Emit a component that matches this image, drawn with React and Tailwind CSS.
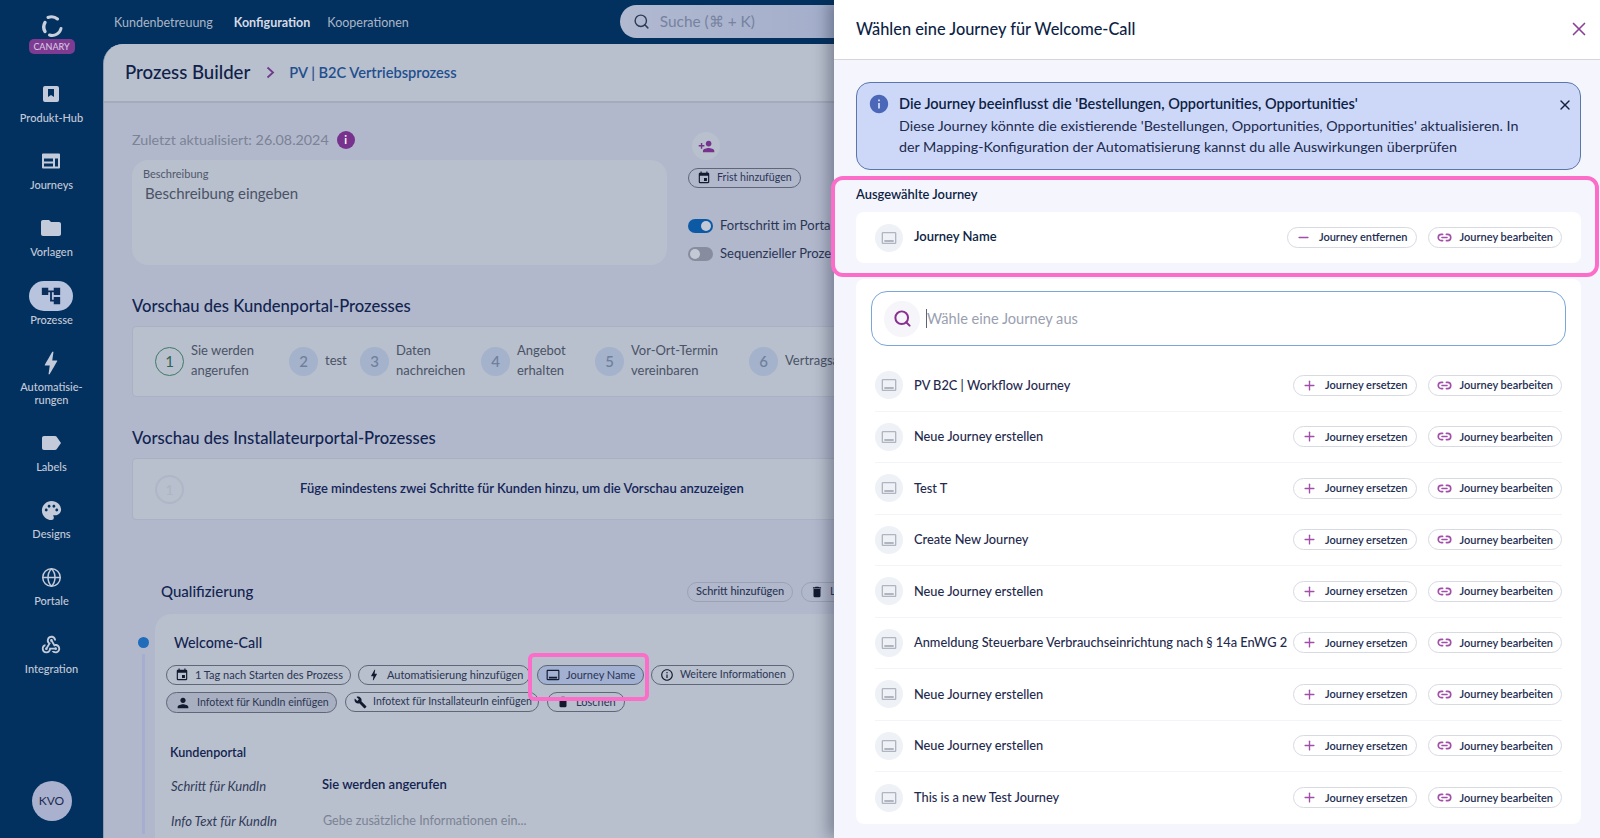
import { Globe, Link2, Minus, Plus, Search, X } from 'lucide-react';
import {
  MdAccountTree,
  MdBolt,
  MdBuild,
  MdDelete,
  MdEvent,
  MdFolder,
  MdInfo,
  MdInfoOutline,
  MdLabel,
  MdOutlineCallToAction,
  MdPalette,
  MdPerson,
  MdPersonAdd,
  MdWebhook,
} from 'react-icons/md';

function HubIcon() {
  return (
    <svg width="20" height="20" viewBox="0 0 20 20">
      <path fillRule="evenodd" fill="#c3cad9" d="M4 2h12a2 2 0 0 1 2 2v12a2 2 0 0 1-2 2H4a2 2 0 0 1-2-2V4a2 2 0 0 1 2-2zm3 3v8l3-2 3 2V5z" />
    </svg>
  );
}

function JourneysIcon() {
  return (
    <svg width="20" height="20" viewBox="0 0 20 20">
      <path fillRule="evenodd" fill="#c3cad9" d="M2 2.500h16a1 1 0 0 1 1 1v13a1 1 0 0 1-1 1H2a1 1 0 0 1-1-1v-13a1 1 0 0 1 1-1zm1 5v3h9v-3zm0 5v3h9v-3zm11-5v8h3v-8z" />
    </svg>
  );
}

function Logo() {
  return (
    <svg width="24" height="24" viewBox="0 0 24 24" fill="none" stroke="#c9d0dc" strokeLinecap="round">
      <path d="M8 3.500A9 9 0 0 1 17.500 5" strokeWidth="3" />
      <path d="M5 8.500A9 9 0 0 0 5 17.500" strokeWidth="3.400" />
      <path d="M9.500 21A9 9 0 0 0 21 14.500" strokeWidth="3" />
    </svg>
  );
}

const navItems = [
  { label: 'Produkt-Hub', icon: <HubIcon /> },
  { label: 'Journeys', icon: <JourneysIcon /> },
  { label: 'Vorlagen', icon: <MdFolder size={24} color="#c3cad9" /> },
  { label: 'Prozesse', icon: <MdAccountTree size={22} color="#0b2e5c" />, active: true },
  { label: 'Automatisie-\nrungen', icon: <MdBolt size={30} color="#c3cad9" /> },
  { label: 'Labels', icon: <MdLabel size={24} color="#c3cad9" /> },
  { label: 'Designs', icon: <MdPalette size={23} color="#c3cad9" /> },
  { label: 'Portale', icon: <Globe size={21} color="#c3cad9" strokeWidth={1.7} /> },
  { label: 'Integration', icon: <MdWebhook size={22} color="#c3cad9" /> },
];

const steps = [
  { n: 1, lines: ['Sie werden', 'angerufen'], width: 'w-[134px]', first: true },
  { n: 2, lines: ['test'], width: 'w-[71px]' },
  { n: 3, lines: ['Daten', 'nachreichen'], width: 'w-[121px]' },
  { n: 4, lines: ['Angebot', 'erhalten'], width: 'w-[114px]' },
  { n: 5, lines: ['Vor-Ort-Termin', 'vereinbaren'], width: 'w-[154px]' },
  { n: 6, lines: ['Vertragsabschluss'], width: 'w-[150px]' },
];

const journeys = [
  'PV B2C | Workflow Journey',
  'Neue Journey erstellen',
  'Test T',
  'Create New Journey',
  'Neue Journey erstellen',
  'Anmeldung Steuerbare Verbrauchseinrichtung nach § 14a EnWG 2',
  'Neue Journey erstellen',
  'Neue Journey erstellen',
  'This is a new Test Journey',
];

function Sidebar() {
  return (
    <aside className="w-[103px] shrink-0 bg-[#03315f] flex flex-col items-center">
      <div className="h-[79px] flex flex-col items-center pt-[14px]">
        <Logo />
        <span className="mt-[1px] h-[15px] w-[46px] rounded-[5px] bg-[#7d3c92] text-[9px] leading-[15px] font-medium text-center text-[#d9c6e2]">CANARY</span>
      </div>
      <nav className="flex flex-col items-center gap-[21.200px]">
        {navItems.map((item) => (
          <div key={item.label} className="flex flex-col items-center">
            <div className={item.active ? 'h-[30px] w-[44px] rounded-full bg-[#b8c4de] flex items-center justify-center' : 'h-[30px] flex items-center justify-center'}>
              {item.icon}
            </div>
            <span className="text-[11px] leading-[13.500px] min-h-[16px] pt-[2px] font-medium text-[#c3cad9] text-center whitespace-pre-line">{item.label}</span>
          </div>
        ))}
      </nav>
      <div className="mt-auto mb-[17px] w-[40px] h-[40px] rounded-full bg-[#a9b1cf] flex items-center justify-center text-[12px] text-[#1d2b4f]">KVO</div>
    </aside>
  );
}

function TopBar() {
  return (
    <header className="h-[44px] shrink-0 flex items-center relative">
      <nav className="flex items-center pl-[11px] pt-[2px] text-[12.500px] text-[#a9b5c6]">
        <span>Kundenbetreuung</span>
        <span className="ml-[21px] font-bold text-[#d5dae4]">Konfiguration</span>
        <span className="ml-[17px]">Kooperationen</span>
      </nav>
      <div className="ml-[211px] mb-[1px] w-[400px] h-[33px] rounded-full bg-gradient-to-r from-[#b0b9d0] to-[#99a5c6] flex items-center pl-[13px]">
        <Search size={17} color="#2e3a55" strokeWidth={2} />
        <span className="ml-[10px] text-[15.400px] text-[#76829f]">Suche (⌘ + K)</span>
      </div>
    </header>
  );
}

function Pill({ icon, children, className = '' }) {
  return (
    <span className={`inline-flex items-center shrink-0 h-[20px] pl-[8px] gap-[6px] rounded-full border border-[#5e6678] text-[11px] text-[#2a3554] whitespace-nowrap ${className}`}>
      {icon}
      {children}
    </span>
  );
}

function Toggle({ on }) {
  return (
    <span className={on ? 'w-[25px] h-[14px] rounded-full bg-[#0c5aa5] flex items-center justify-end pr-[2px]' : 'w-[25px] h-[14px] rounded-full bg-[#878d9f] flex items-center pl-[2px]'}>
      <span className="w-[10px] h-[10px] rounded-full bg-[#c3c9d5]" />
    </span>
  );
}

function StepCircle({ n, first }) {
  return (
    <span className={first
      ? 'w-[29px] h-[29px] shrink-0 rounded-full border border-[#3f7a64] text-[#2c6450] flex items-center justify-center text-[15px]'
      : 'w-[29px] h-[29px] shrink-0 rounded-full bg-[#a4b2cb] text-[#6f7f9c] flex items-center justify-center text-[15px] font-medium'}>
      {n}
    </span>
  );
}

function MainPanel() {
  return (
    <main className="flex-1 min-h-0 rounded-tl-[20px] bg-[#b1b8cc] overflow-hidden border-l border-[#8e9ab0]">
      <div className="h-[59px] bg-[#b8bfcd] border-b-2 border-[#a4abba] flex items-center pl-[21px]">
        <span className="text-[18.600px] font-medium text-[#0f2148]">Prozess Builder</span>
        <svg className="ml-[16px]" width="9" height="13" viewBox="0 0 9 13" fill="none" stroke="#6f3a8c" strokeWidth="1.800"><path d="M1.500 1.500l5.500 5-5.500 5" /></svg>
        <span className="ml-[14px] text-[14.600px] font-semibold text-[#1f4f8f]">PV | B2C Vertriebsprozess</span>
      </div>

      <div className="pl-[28px] w-[1200px]">
        <div className="flex mt-[27px]">
          <div className="w-[535px]">
            <div className="h-[20px] flex items-center gap-[8px] text-[14.300px] text-[#7b8394]">
              Zuletzt aktualisiert: 26.08.2024
              <span className="w-[18px] h-[18px] rounded-full bg-[#77328e] text-white text-[11px] font-bold flex items-center justify-center">i</span>
            </div>
            <div className="mt-[10px] h-[105px] rounded-[16px] bg-[#b8bfcd] pl-[11px] pt-[7px]">
              <div className="text-[11px] leading-[14px] text-[#4f586b]">Beschreibung</div>
              <div className="mt-[2px] pl-[2px] text-[15px] leading-[20px] text-[#4a5366]">Beschreibung eingeben</div>
            </div>
          </div>
          <div className="ml-[21px] mt-[2px] flex flex-col items-start">
            <span className="ml-[4px] w-[28px] h-[28px] rounded-full bg-[#b8bfcd] flex items-center justify-center">
              <MdPersonAdd size={17} color="#77328e" />
            </span>
            <Pill className="mt-[8px] w-[113px] !text-[10.600px]" icon={<MdEvent size={14} color="#111a2e" />}>Frist hinzufügen</Pill>
            <div className="mt-[31px] h-[14px] flex items-center gap-[7px] text-[13px] text-[#2a3554]"><Toggle on />Fortschritt im Portal anzeigen</div>
            <div className="mt-[14px] h-[14px] flex items-center gap-[7px] text-[13px] text-[#2a3554]"><Toggle />Sequenzieller Prozess</div>
          </div>
        </div>

        <h2 className="mt-[29px] h-[24px] leading-[24px] text-[16.600px] font-medium text-[#122450]">Vorschau des Kundenportal-Prozesses</h2>
        <div className="mt-[8px] h-[71px] rounded-[4px] bg-[#b8bfcd] border border-[#a9b1c2] flex items-center pl-[22px]">
          {steps.map((s) => (
            <div key={s.n} className={`flex items-center gap-[7px] shrink-0 ${s.width}`}>
              <StepCircle n={s.n} first={s.first} />
              <div className="-mt-[2px] text-[13px] leading-[19.500px] text-[#4a5366]">
                {s.lines.map((l) => <div key={l}>{l}</div>)}
              </div>
            </div>
          ))}
        </div>

        <h2 className="mt-[29px] h-[24px] leading-[24px] text-[16.600px] font-medium text-[#122450]">Vorschau des Installateurportal-Prozesses</h2>
        <div className="mt-[8px] h-[62px] rounded-[4px] bg-[#b8bfcd] border border-[#a9b1c2] flex items-center pl-[22px]">
          <span className="w-[29px] h-[29px] rounded-full border-2 border-[#afb6c6] text-[#adb4c4] flex items-center justify-center text-[14px]">1</span>
          <span className="ml-[116px] text-[13px] font-semibold text-[#14265a]">Füge mindestens zwei Schritte für Kunden hinzu, um die Vorschau anzuzeigen</span>
        </div>

        <div className="mt-[61px] h-[21px] flex items-center pl-[29px]">
          <span className="w-[526px] text-[15px] font-medium text-[#122450]">Qualifizierung</span>
          <Pill className="w-[106px] !border-[#9aa2b6] font-medium">Schritt hinzufügen</Pill>
          <Pill className="ml-[8px] w-[90px] !border-[#9aa2b6]" icon={<MdDelete size={14} color="#111a2e" />}>Löschen</Pill>
        </div>

        <div className="mt-[12px] flex">
          <div className="w-[23px] shrink-0 flex flex-col items-center">
            <span className="mt-[23px] w-[11px] h-[11px] rounded-full bg-[#1f6cbb]" />
            <span className="mt-[6px] w-[3px] h-[180px] bg-[#a5aed0]" />
          </div>
          <div className="flex-1 rounded-tl-[16px] bg-[#b8bfcd] pl-[11px] h-[240px]">
            <div className="mt-[19px] pl-[8px] h-[20px] leading-[20px] text-[14.300px] font-medium text-[#122450]">Welcome-Call</div>
            <div className="mt-[12px] flex gap-[7px]">
              <Pill className="w-[185px]" icon={<MdEvent size={14} color="#111a2e" />}>1 Tag nach Starten des Prozess</Pill>
              <Pill className="w-[172px]" icon={<MdBolt size={14} color="#111a2e" />}>Automatisierung hinzufügen</Pill>
              <Pill className="w-[107px] bg-[#a2b0d2]" icon={<MdOutlineCallToAction size={14} color="#111a2e" />}>Journey Name</Pill>
              <Pill className="w-[143px] !text-[10.600px]" icon={<MdInfoOutline size={14} color="#111a2e" />}>Weitere Informationen</Pill>
            </div>
            <div className="mt-[7px] flex gap-[8px]">
              <Pill className="w-[171px] !h-[21px] bg-[#a8afc0] !text-[10.600px]" icon={<MdPerson size={16} color="#111a2e" />}>Infotext für KundIn einfügen</Pill>
              <Pill className="w-[194px] !text-[10.600px]" icon={<MdBuild size={13} color="#111a2e" />}>Infotext für InstallateurIn einfügen</Pill>
              <Pill className="w-[78px]" icon={<MdDelete size={14} color="#111a2e" />}>Löschen</Pill>
            </div>
            <div className="mt-[31px] pl-[4px] text-[12.600px] leading-[18px] font-semibold text-[#122450]">Kundenportal</div>
            <div className="mt-[14px] pl-[5px] flex items-center text-[13px] leading-[18px]">
              <span className="w-[151px] italic text-[#2f3a58] translate-y-[1px]">Schritt für KundIn</span>
              <span className="font-semibold text-[#122450] -translate-y-[1px]">Sie werden angerufen</span>
            </div>
            <div className="mt-[18px] pl-[5px] flex items-center text-[13px] leading-[18px]">
              <span className="w-[152px] italic text-[#2f3a58]">Info Text für KundIn</span>
              <span className="text-[12.600px] text-[#7b8394]">Gebe zusätzliche Informationen ein...</span>
            </div>
          </div>
        </div>
      </div>
    </main>
  );
}

function ActionPill({ icon, children }) {
  return (
    <span className="inline-flex items-center h-[21px] pl-[8px] pr-[8px] gap-[8px] rounded-full border border-[#d8dae2] bg-white text-[11px] font-semibold text-[#232d52] whitespace-nowrap">
      {icon}
      {children}
    </span>
  );
}

function JourneyAvatar() {
  return (
    <span className="w-[28px] h-[28px] shrink-0 rounded-full bg-[#eef1f6] flex items-center justify-center">
      <MdOutlineCallToAction size={16} color="#b0b5c0" />
    </span>
  );
}

function EditPill() {
  return <ActionPill icon={<Link2 size={15} color="#a14fa8" strokeWidth={2.600} />}>Journey bearbeiten</ActionPill>;
}

function Drawer() {
  return (
    <aside className="absolute top-0 right-0 bottom-0 w-[766px] bg-[#f5f6fd] shadow-[-6px_0_14px_rgba(20,25,45,0.35)] flex flex-col">
      <div className="h-[60px] shrink-0 bg-white border-b border-[#d5d6da] flex items-center justify-between pl-[22px] pr-[10px] pb-[1px]">
        <h1 className="text-[16.350px] font-medium text-[#0e1f45]">Wählen eine Journey für Welcome-Call</h1>
        <X size={22} color="#8b3f96" strokeWidth={1.8} />
      </div>

      <div className="mt-[22px] mx-[22px] mr-[19px] h-[88px] rounded-[14px] bg-[#cdd8f8] border border-[#5a76ab] flex pl-[13px] pr-[7px] pt-[10px] text-[14.300px] leading-[21.500px] text-[#1c2a4e]">
        <MdInfo size={22} color="#4a67b8" className="shrink-0 -ml-[2px]" />
        <div className="ml-[9px] mr-[24px] flex-1">
          <div className="text-[14.500px] font-semibold text-[#0e1f45]">Die Journey beeinflusst die 'Bestellungen, Opportunities, Opportunities'</div>
          <div>Diese Journey könnte die existierende 'Bestellungen, Opportunities, Opportunities' aktualisieren. In der Mapping-Konfiguration der Automatisierung kannst du alle Auswirkungen überprüfen</div>
        </div>
        <X size={16} color="#15203d" strokeWidth={2} className="shrink-0 mt-[4px]" />
      </div>

      <div className="mt-[16px] pl-[22px] h-[16px] leading-[16px] text-[12.900px] font-semibold text-[#0e1f45]">Ausgewählte Journey</div>
      <div className="mt-[10px] ml-[22px] mr-[19px] h-[51px] rounded-[8px] bg-white flex items-center px-[19px]">
        <JourneyAvatar />
        <span className="ml-[11px] -mt-[2px] text-[13px] font-semibold text-[#0e1f45]">Journey Name</span>
        <span className="ml-auto flex gap-[11px]">
          <ActionPill icon={<Minus size={15} color="#a14fa8" strokeWidth={2.400} />}>Journey entfernen</ActionPill>
          <EditPill />
        </span>
      </div>

      <div className="mt-[16px] ml-[22px] mr-[19px] rounded-[8px] bg-white pt-[12px]">
        <div className="mx-[15px] h-[55px] rounded-[16px] border border-[#7ba6db] flex items-center pl-[12px]">
          <span className="w-[36px] h-[36px] rounded-full bg-[#f5f5fa] flex items-center justify-center">
            <Search size={19} color="#8a2f90" strokeWidth={2.500} />
          </span>
          <span className="ml-[6px] border-l border-[#5c6478] text-[14.600px] leading-[19px] text-[#9a9fb0]">Wähle eine Journey aus</span>
        </div>
        <div className="mt-[14px]">
          {journeys.map((name, i) => (
            <div key={i} className="h-[51.500px] flex items-center mx-[19px] border-b border-[#f3f4f8] last:border-b-0">
              <JourneyAvatar />
              <span className="ml-[11px] text-[12.800px] font-medium text-[#1f2a4e] whitespace-nowrap">{name}</span>
              <span className="ml-auto flex gap-[11px]">
                <ActionPill icon={<Plus size={15} color="#a14fa8" strokeWidth={2.200} />}>Journey ersetzen</ActionPill>
                <EditPill />
              </span>
            </div>
          ))}
        </div>
      </div>
    </aside>
  );
}

export default function App() {
  return (
    <div className="relative h-[838px] w-[1600px] overflow-hidden flex bg-[#03315f] font-['Lato','Noto_Sans',sans-serif]">
      <Sidebar />
      <div className="flex-1 min-w-0 flex flex-col">
        <TopBar />
        <MainPanel />
      </div>
      <Drawer />
      {/* pink highlight boxes from the screenshot */}
      <div className="absolute left-[528px] top-[653px] w-[121px] h-[48px] rounded-[6px] border-4 border-[#fb6dc9]" />
      <div className="absolute left-[831px] top-[176px] w-[768px] h-[101px] rounded-[12px] border-4 border-[#fb6dc9]" />
    </div>
  );
}
